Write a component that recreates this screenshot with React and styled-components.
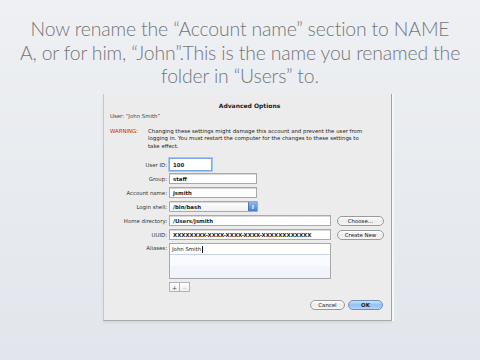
import React from "react";
import styled, { createGlobalStyle } from "styled-components";

const Global = createGlobalStyle`
  html, body { margin: 0; padding: 0; }
  body {
    width: 480px; height: 360px; overflow: hidden;
    background: linear-gradient(180deg, #eef0f3 0%, #e8ebef 50%, #e2e6ec 100%);
  }
`;

const Slide = styled.div`
  width: 480px; height: 360px;
  display: flex; flex-direction: column;
  box-sizing: border-box;
  padding-top: 17px;
`;

const Heading = styled.div`
  font-family: "Lato", "Open Sans", sans-serif;
  font-weight: 300;
  font-size: 19.4px;
  line-height: 23.5px;
  color: #74767a;
  text-align: center;
  white-space: nowrap;
  letter-spacing: -0.15px;
`;

const Dialog = styled.div`
  margin: 6px 0 0 103px;
  width: 289px; height: 227px;
  box-sizing: border-box;
  background: #ececec;
  border-left: 1px solid #c4c6ca;
  border-right: 1px solid #a0a2a6;
  border-bottom: 1px solid #a8aaae;
  box-shadow: 2px 0 0 #f6f7f9, 0 2px 2px rgba(0,0,0,0.06);
  font-family: "DejaVu Sans", sans-serif;
  font-size: 5.4px;
  color: #222;
  display: flex; flex-direction: column;
  padding: 8px 8px 0 6px;
`;

const Title = styled.div`
  text-align: center;
  font-weight: bold;
  font-size: 6px;
  margin-left: 6px;
`;

const UserLine = styled.div`
  margin-top: 4px;
  color: #444;
`;

const Warning = styled.div`
  margin-top: 9px;
  display: grid;
  grid-template-columns: 38px auto;
  line-height: 7.6px;
  white-space: nowrap;
`;

const Red = styled.span`
  color: #d42020;
`;

const Form = styled.div`
  margin-top: 9px;
  display: grid;
  grid-template-columns: 59px 162px auto;
  row-gap: 3px;
  column-gap: 0;
  align-items: center;
`;

const Label = styled.div`
  text-align: right;
  padding-right: 2px;
  color: #333;
`;

const Field = styled.div`
  box-sizing: border-box;
  height: ${p => p.$focus ? 13 : 11}px;
  width: ${p => p.$w}px;
  background: #fff;
  border: 1px solid ${p => p.$focus ? "#7aa7df" : "#a9a9a9"};
  box-shadow: ${p => p.$focus ? "0 0 0 1px #a9c7ee" : "inset 0 1px 0 #d8d8d8"};
  font-weight: bold;
  padding-left: 3px;
  display: flex; align-items: center;
  margin: ${p => p.$focus ? "-1px 0" : "0"};
  font-size: 5.4px;
`;

const Popup = styled(Field)`
  position: relative;
  border-radius: 1px;
  background: linear-gradient(#fefefe, #f0f0f0);
`;

const Arrow = styled.span`
  position: absolute; right: 0; top: 0; bottom: 0; width: 8px;
  background: linear-gradient(#8bb9f0, #3f7fd8);
  border-left: 1px solid #4a78b8;
  display: flex; align-items: center; justify-content: center;
`;

const Btn = styled.div`
  box-sizing: border-box;
  margin-left: ${p => p.$inline ? 0 : 6}px;
  width: ${p => p.$w || 47}px;
  height: 10px;
  border-radius: 5px;
  border: 1px solid ${p => p.$primary ? "#6a8fc0" : "#9a9a9a"};
  background: ${p => p.$primary
    ? "linear-gradient(#cfe4fb, #8fc0f3 50%, #b5d8fb)"
    : "linear-gradient(#ffffff, #ececec 50%, #f6f6f6)"};
  display: flex; align-items: center; justify-content: center;
  font-size: 5.4px;
  color: #222;
  font-weight: ${p => p.$primary ? "bold" : "normal"};
`;

const Table = styled.div`
  grid-column: 2;
  box-sizing: border-box;
  width: 162px; height: 36px;
  border: 1px solid #a9a9a9;
  background: linear-gradient(#f5f7fb, #eef1f8);
  display: flex; flex-direction: column;
`;

const EditRow = styled.div`
  height: 10px;
  background: #fff;
  border-bottom: 1px solid #c7d2e4;
  display: flex; align-items: center;
  padding-left: 2px;
  color: #222;
`;

const Caret = styled.span`
  display: inline-block; width: 0.5px; height: 7px; background: #111; margin-left: 0.5px;
`;

const Stripe = styled.div`
  height: 11px;
  background: ${p => p.$alt ? "#f2f4fb" : "#fafbff"};
`;

const TopAlign = styled(Label)`
  align-self: start;
  padding-top: 2px;
`;

const PlusMinus = styled.div`
  grid-column: 2;
  display: flex;
`;

const Seg = styled.div`
  box-sizing: border-box;
  width: 11px; height: 10px;
  border: 1px solid #b4b4b4;
  margin-left: -1px;
  background: linear-gradient(#fff, #eee);
  display: flex; align-items: center; justify-content: center;
  font-size: 6px;
  color: ${p => p.$dim ? "#bbb" : "#444"};
  &:first-child { margin-left: 0; }
`;

const Footer = styled.div`
  margin-top: 8px;
  display: flex; justify-content: flex-end;
  gap: 3px;
`;

export default function App() {
  return (
    <>
      <Global />
      <Slide>
        <Heading>
          Now rename the “Account name” section to NAME<br />
          A, or for him, “John”.This is the name you renamed the<br />
          folder in “Users” to.
        </Heading>
        <Dialog>
          <Title>Advanced Options</Title>
          <UserLine>User: “John Smith”</UserLine>
          <Warning>
            <Red>WARNING:</Red>
            <span>
              Changing these settings might damage this account and prevent the user from<br />
              logging in. You must restart the computer for the changes to these settings to<br />
              take effect.
            </span>
          </Warning>
          <Form>
            <Label>User ID:</Label>
            <div><Field $w={43} $focus>100</Field></div>
            <span />
            <Label>Group:</Label>
            <div><Field $w={88}>staff</Field></div>
            <span />
            <Label>Account name:</Label>
            <div><Field $w={88}>jsmith</Field></div>
            <span />
            <Label>Login shell:</Label>
            <div>
              <Popup $w={89}>
                /bin/bash
                <Arrow>
                  <svg width="4" height="6" viewBox="0 0 4 6">
                    <path d="M0.5 2.4 L2 0.8 L3.5 2.4 Z M0.5 3.6 L2 5.2 L3.5 3.6 Z" fill="#fff" />
                  </svg>
                </Arrow>
              </Popup>
            </div>
            <span />
            <Label>Home directory:</Label>
            <Field $w={162}>/Users/jsmith</Field>
            <Btn>Choose…</Btn>
            <Label>UUID:</Label>
            <Field $w={162}>XXXXXXXX-XXXX-XXXX-XXXX-XXXXXXXXXXXX</Field>
            <Btn>Create New</Btn>
            <TopAlign>Aliases:</TopAlign>
            <Table>
              <EditRow>John Smith<Caret /></EditRow>
              <Stripe />
              <Stripe $alt />
            </Table>
            <span />
            <PlusMinus>
              <Seg>+</Seg>
              <Seg $dim>−</Seg>
            </PlusMinus>
          </Form>
          <Footer>
            <Btn $inline $w={35}>Cancel</Btn>
            <Btn $inline $w={35} $primary>OK</Btn>
          </Footer>
        </Dialog>
      </Slide>
    </>
  );
}
